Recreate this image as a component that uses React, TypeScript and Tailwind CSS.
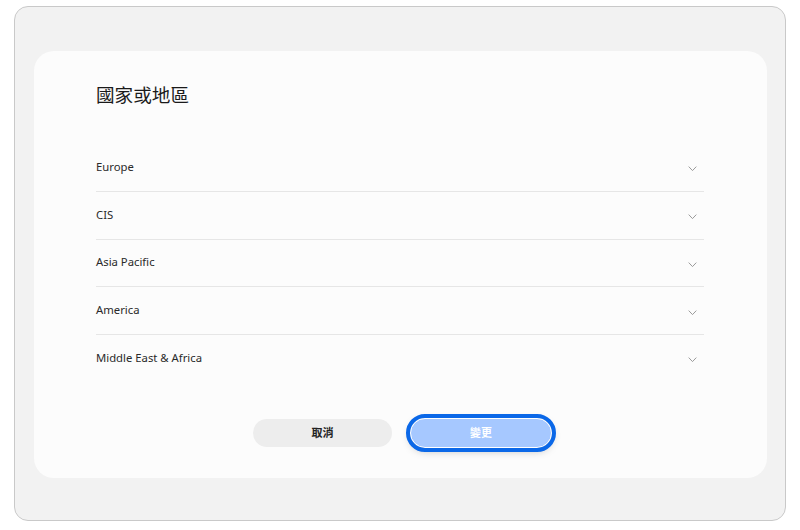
import { Fragment } from "react";

const regions = ["Europe", "CIS", "Asia Pacific", "America", "Middle East & Africa"];

function Chevron() {
  return (
    <svg width="9" height="6" viewBox="0 0 9 6" fill="none" className="mt-[4px] text-[#9a9a9a]">
      <path d="M0.7 0.6 L4.5 4.6 L8.3 0.6" stroke="currentColor" strokeWidth="1" />
    </svg>
  );
}

export default function App() {
  return (
    <div
      className="w-[800px] h-[530px] bg-white pl-[14px] pr-[14px] pt-[6px] pb-[9px]"
      style={{ fontFamily: '"Noto Sans", "Noto Sans CJK TC", sans-serif' }}
    >
      <div className="h-full rounded-[14px] border border-[#c9c9c9] bg-[#f2f2f2] pl-[19px] pr-[18px] pt-[44px] pb-[42px]">
        <div className="h-full rounded-[20px] bg-[#fcfcfc] pl-[62px] pr-[63px] pt-[28px]">
          <h1 className="text-[18.6px] leading-[32px] text-[#1a1a1a]">國家或地區</h1>
          <div className="mt-[33px]">
            {regions.map((r, i) => (
              <Fragment key={r}>
                {i > 0 && <div className="h-px bg-[#e6e6e6]" />}
                <div className="flex h-[46.75px] items-center justify-between pr-[7px]">
                  <span className="text-[11.3px] text-[#2a2a2a]">{r}</span>
                  <Chevron />
                </div>
              </Fragment>
            ))}
          </div>
          <div className="mt-[37px] flex justify-center gap-[18px] pl-[5px]">
            <button className="h-[28px] w-[139px] rounded-full bg-[#ededed] text-[11px] font-bold text-[#222]">
              取消
            </button>
            <button className="h-[30px] w-[142px] -mt-[1px] rounded-full border-[1.5px] border-white bg-[#a6c8ff] text-[11px] font-bold text-white outline-[4px] outline-solid outline-[#0b68e8] shadow-[0_3px_8px_rgba(0,0,0,0.25)]">
              變更
            </button>
          </div>
        </div>
      </div>
    </div>
  );
}
